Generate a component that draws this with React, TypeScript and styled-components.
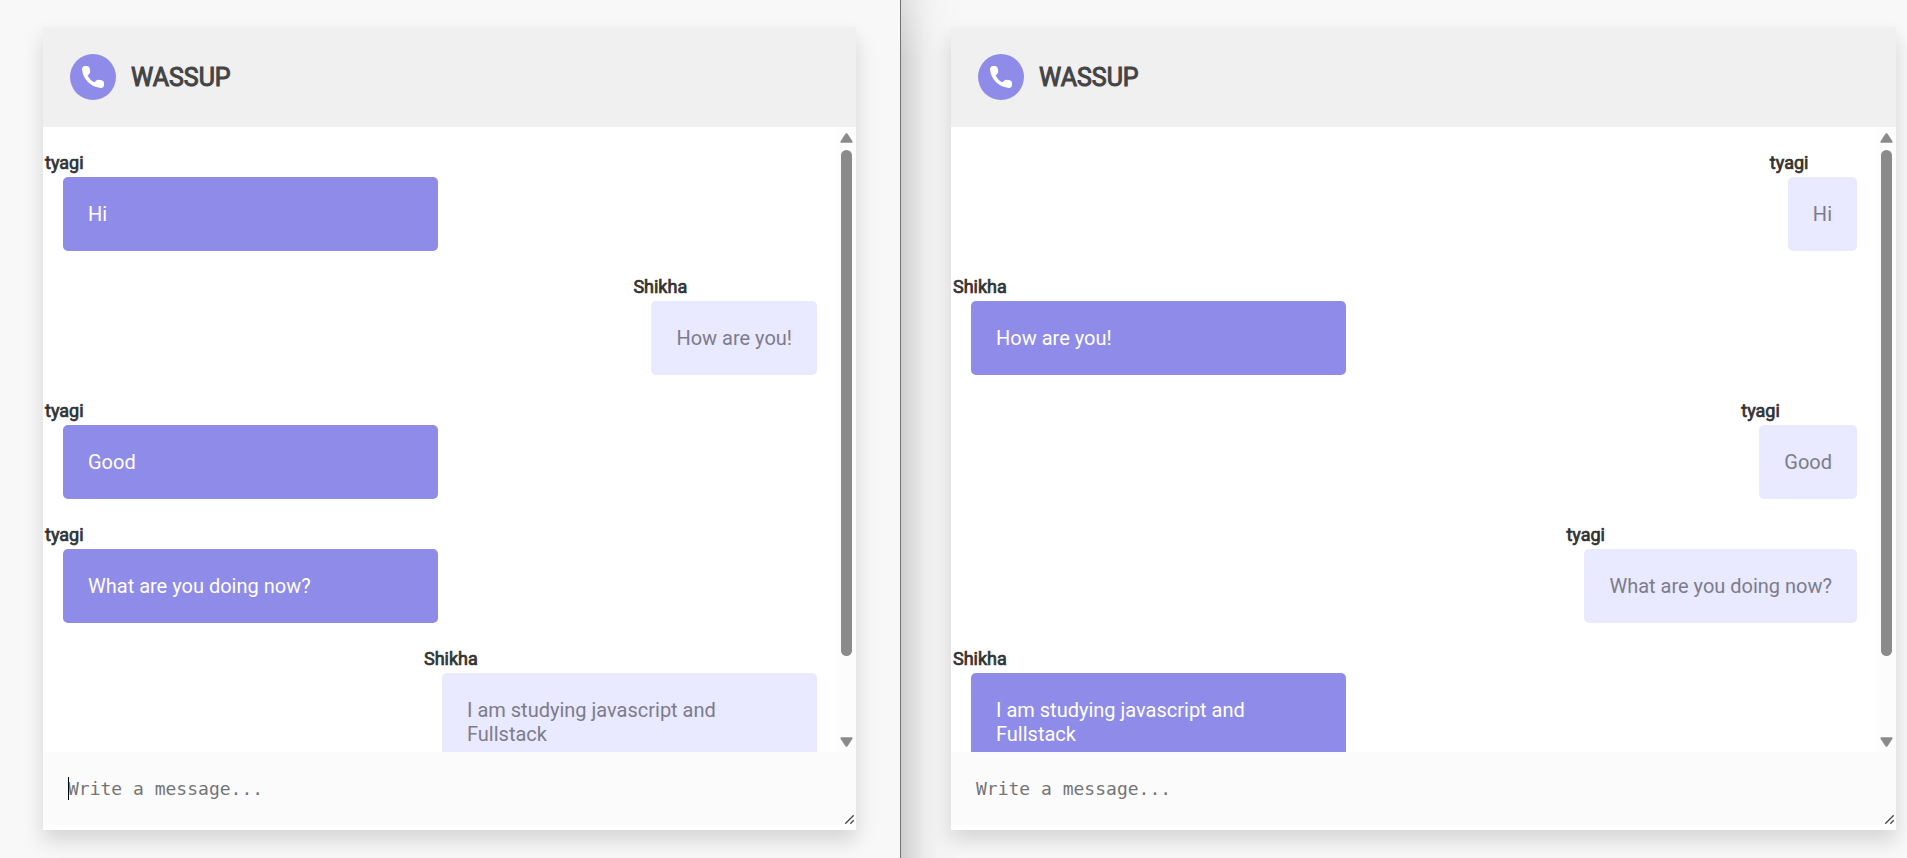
import React from "react";
import styled, { createGlobalStyle } from "styled-components";

const GlobalStyle = createGlobalStyle`
  *, *::before, *::after { box-sizing: border-box; }
  body {
    margin: 0;
    background: #f8f8f8;
    font-family: Roboto, "Liberation Sans", sans-serif;
    color: #333;
  }
`;

const Screen = styled.main`
  display: grid;
  grid-template-columns: minmax(0, 900fr) minmax(0, 1007fr);
  grid-template-rows: minmax(0, 1fr);
  height: 100vh;
  min-height: 480px;
  overflow: hidden;
`;

const Pane = styled.section<{ $side: "left" | "right" }>`
  display: flex;
  padding: ${(p) => (p.$side === "left" ? "27px 44px 28px 43px" : "27px 11px 28px 50px")};
  border-left: ${(p) => (p.$side === "right" ? "1px solid #737373" : "none")};
  background: ${(p) =>
    p.$side === "right"
      ? `linear-gradient(180deg, rgba(248, 248, 248, 0.4) 0, rgba(248, 248, 248, 0) 60px),
         linear-gradient(90deg, #cecece 0, #dedede 12px, #ececec 24px, #f3f3f3 36px, #f8f8f8 60px)`
      : "#f8f8f8"};
`;

const Card = styled.div`
  flex: 1;
  min-width: 0;
  display: flex;
  flex-direction: column;
  background: #fff;
  padding-bottom: 5px;
  box-shadow: 0 11px 20px rgba(0, 0, 0, 0.14);
`;

const Header = styled.header`
  display: flex;
  align-items: center;
  gap: 15px;
  height: 100px;
  flex: none;
  padding: 0 27px;
  background: #f0f0f0;
`;

const CallButton = styled.button`
  display: flex;
  align-items: center;
  justify-content: center;
  width: 46px;
  height: 46px;
  padding: 0;
  border: 0;
  border-radius: 50%;
  background: #8f8be8;
  color: #fff;
`;

const Title = styled.h1`
  margin: 0;
  font-size: 25px;
  line-height: 31px;
  font-weight: 400;
  color: #444;
  -webkit-text-stroke: 0.04em currentColor;
`;

const History = styled.div`
  flex: 1;
  min-height: 0;
  display: flex;
`;

const MessageList = styled.ol`
  flex: 1;
  min-width: 0;
  margin: 0;
  padding: 25px 20px 0;
  overflow: hidden;
  list-style: none;
`;

const Message = styled.li<{ $own: boolean }>`
  display: flex;
  flex-direction: column;
  width: ${(p) => (p.$own ? "fit-content" : "375px")};
  max-width: 375px;
  margin-left: ${(p) => (p.$own ? "auto" : "0")};
  margin-bottom: 25px;
`;

const Author = styled.h2`
  margin: 0 0 3px -18px;
  font-size: 18px;
  line-height: 22px;
  font-weight: 400;
  -webkit-text-stroke: 0.04em currentColor;
`;

const Bubble = styled.p<{ $own: boolean }>`
  margin: 0;
  padding: 25px;
  border-radius: 5px;
  font-size: 20px;
  line-height: 24px;
  background: ${(p) => (p.$own ? "#e9e9ff" : "#8f8be8")};
  color: ${(p) => (p.$own ? "#7c7c8b" : "#fff")};
`;

const Scrollbar = styled.div`
  flex: none;
  width: 19px;
  display: flex;
  flex-direction: column;
  align-items: center;
  padding: 6px 0 5px;
  background: #fcfcfc;
  color: #8b8b8b;
`;

const Track = styled.div`
  flex: 1;
  width: 11px;
  margin: 7px 0 12px;
`;

const Thumb = styled.div`
  height: 88%;
  border-radius: 6px;
  background: currentColor;
`;

const Composer = styled.div`
  position: relative;
  flex: none;
  display: flex;
`;

const MessageBox = styled.textarea`
  flex: 1;
  min-width: 0;
  height: 73px;
  padding: 25px;
  border: 0;
  outline: 0;
  resize: none;
  overflow: hidden;
  background: #fbfbfb;
  font-family: Consolas, "DejaVu Sans Mono", monospace;
  font-size: 18px;
  line-height: 23px;
  &::placeholder { color: #757575; }
`;

const Caret = styled.span`
  position: absolute;
  left: 25px;
  top: 25px;
  width: 1px;
  height: 23px;
  background: #000;
`;

const Grip = styled.svg`
  position: absolute;
  right: 2px;
  bottom: 1px;
`;

type Line = { author: string; text: string };

const conversation: Line[] = [
  { author: "tyagi", text: "Hi" },
  { author: "Shikha", text: "How are you!" },
  { author: "tyagi", text: "Good" },
  { author: "tyagi", text: "What are you doing now?" },
  { author: "Shikha", text: "I am studying javascript and Fullstack" },
];

const PhoneIcon = () => (
  <svg
    width="22"
    height="22"
    viewBox="2.5 2.5 19 19"
    fill="currentColor"
    stroke="currentColor"
    strokeWidth="1"
    aria-hidden="true"
  >
    <path d="M19.23 15.26l-2.54-.29c-.61-.07-1.21.14-1.64.57l-1.84 1.84c-2.83-1.44-5.15-3.75-6.59-6.59l1.85-1.85c.43-.43.64-1.03.57-1.64l-.29-2.52c-.12-1.01-.97-1.77-1.99-1.77H5.03c-1.13 0-2.07.94-2 2.07.53 8.54 7.36 15.36 15.89 15.89 1.13.07 2.07-.87 2.07-2v-1.73c.01-1.01-.75-1.86-1.76-1.98z" />
  </svg>
);

const Arrow = ({ down = false }: { down?: boolean }) => (
  <svg width="13" height="10" viewBox="0 0 13 10" fill="currentColor" aria-hidden="true">
    <path
      d={
        down
          ? "M1.6.3H11.4C12.6.3 13 1.2 12.3 2.1L7.7 8.9C7 9.9 6 9.9 5.3 8.9L.7 2.1C0 1.2.4.3 1.6.3Z"
          : "M1.6 9.7H11.4C12.6 9.7 13 8.8 12.3 7.9L7.7 1.1C7 .1 6 .1 5.3 1.1L.7 7.9C0 8.8.4 9.7 1.6 9.7Z"
      }
    />
  </svg>
);

function Chat({ me, focused = false }: { me: string; focused?: boolean }) {
  return (
    <Card>
      <Header>
        <CallButton type="button" aria-label="Call">
          <PhoneIcon />
        </CallButton>
        <Title>WASSUP</Title>
      </Header>
      <History>
        <MessageList>
          {conversation.map((line, i) => (
            <Message key={i} $own={line.author === me}>
              <Author>{line.author}</Author>
              <Bubble $own={line.author === me}>{line.text}</Bubble>
            </Message>
          ))}
        </MessageList>
        <Scrollbar aria-hidden="true">
          <Arrow />
          <Track>
            <Thumb />
          </Track>
          <Arrow down />
        </Scrollbar>
      </History>
      <Composer>
        <MessageBox aria-label="Message" placeholder="Write a message..." />
        {focused && <Caret />}
        <Grip width="9" height="9" viewBox="0 0 9 9" stroke="#4a4a4a" strokeWidth="1.4" aria-hidden="true">
          <path d="M.3 8.7 8.7.3M5.3 8.7 8.7 5.3" />
        </Grip>
      </Composer>
    </Card>
  );
}

export default function App() {
  return (
    <>
      <GlobalStyle />
      <Screen>
        <Pane $side="left">
          <Chat me="Shikha" focused />
        </Pane>
        <Pane $side="right">
          <Chat me="tyagi" />
        </Pane>
      </Screen>
    </>
  );
}
